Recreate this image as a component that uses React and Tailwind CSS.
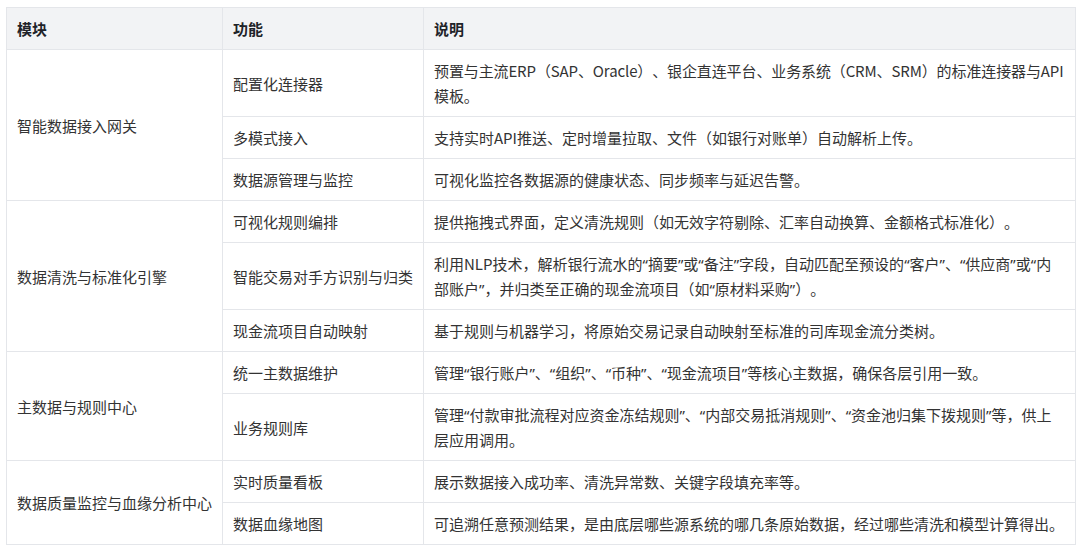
import React from "react";

const groups = [
  {
    name: "智能数据接入网关",
    rows: [
      ["配置化连接器", "预置与主流ERP（SAP、Oracle）、银企直连平台、业务系统（CRM、SRM）的标准连接器与API模板。", "tracking-[-0.12px]"],
      ["多模式接入", "支持实时API推送、定时增量拉取、文件（如银行对账单）自动解析上传。"],
      ["数据源管理与监控", "可视化监控各数据源的健康状态、同步频率与延迟告警。"],
    ],
  },
  {
    name: "数据清洗与标准化引擎",
    rows: [
      ["可视化规则编排", "提供拖拽式界面，定义清洗规则（如无效字符剔除、汇率自动换算、金额格式标准化）。"],
      ["智能交易对手方识别与归类", "利用NLP技术，解析银行流水的“摘要”或“备注”字段，自动匹配至预设的“客户”、“供应商”或“内部账户”，并归类至正确的现金流项目（如“原材料采购”）。"],
      ["现金流项目自动映射", "基于规则与机器学习，将原始交易记录自动映射至标准的司库现金流分类树。"],
    ],
  },
  {
    name: "主数据与规则中心",
    rows: [
      ["统一主数据维护", "管理“银行账户”、“组织”、“币种”、“现金流项目”等核心主数据，确保各层引用一致。"],
      ["业务规则库", "管理“付款审批流程对应资金冻结规则”、“内部交易抵消规则”、“资金池归集下拨规则”等，供上层应用调用。"],
    ],
  },
  {
    name: "数据质量监控与血缘分析中心",
    rows: [
      ["实时质量看板", "展示数据接入成功率、清洗异常数、关键字段填充率等。"],
      ["数据血缘地图", "可追溯任意预测结果，是由底层哪些源系统的哪几条原始数据，经过哪些清洗和模型计算得出。"],
    ],
  },
];

function Rich({ text }) {
  const parts = text.split(/([“”])/);
  return parts.map((p, i) =>
    p === "“" || p === "”" ? (
      <span key={i} className="font-['Noto_Sans',sans-serif] leading-none">
        {p}
      </span>
    ) : (
      <React.Fragment key={i}>{p}</React.Fragment>
    )
  );
}

const cell = "border border-[#e4e6ea] px-[10px] py-[8px] align-middle";

export default function App() {
  return (
    <div
      className="w-[1080px] h-[550px] bg-white pl-[6px] pt-[7px] text-[#333333] text-[15px] leading-[25px] [text-spacing-trim:space-all]"
      style={{ fontFamily: '"Noto Sans CJK SC", "Noto Sans", sans-serif' }}
    >
      <table className="w-[1069px] border-collapse table-fixed">
        <colgroup>
          <col className="w-[216px]" />
          <col className="w-[201px]" />
          <col className="w-[652px]" />
        </colgroup>
        <thead>
          <tr className="bg-[#f2f3f5]">
            <th className={`${cell} text-left font-bold text-[#1f2329]`}>模块</th>
            <th className={`${cell} text-left font-bold text-[#1f2329]`}>功能</th>
            <th className={`${cell} text-left font-bold text-[#1f2329]`}>说明</th>
          </tr>
        </thead>
        <tbody>
          {groups.map((g) =>
            g.rows.map((r, i) => (
              <tr key={g.name + i}>
                {i === 0 && (
                  <td className={cell} rowSpan={g.rows.length}>
                    {g.name}
                  </td>
                )}
                <td className={cell}>{r[0]}</td>
                <td className={`${cell} ${r[2] || ""}`}>
                  <Rich text={r[1]} />
                </td>
              </tr>
            ))
          )}
        </tbody>
      </table>
    </div>
  );
}
